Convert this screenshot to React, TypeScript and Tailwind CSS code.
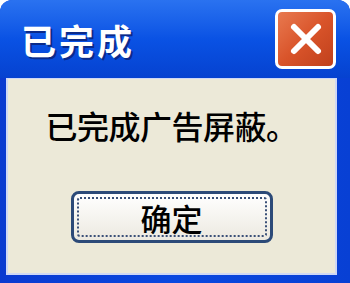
export default function App() {
  return (
    <div className="w-[350px] h-[283px] bg-white overflow-hidden">
      <div className="h-full flex flex-col rounded-t-[12px] bg-gradient-to-r from-[#0a3ad0] via-[#0a48e0] to-[#0840d4]">
        {/* title bar */}
        <div className="h-[78px] shrink-0 flex items-center justify-between pl-[21px] pr-[14px] rounded-t-[12px] bg-gradient-to-b from-[#2a72f0] via-[#0a52e4] to-[#0642d0]">
          <span
            className="text-white text-[35px] font-bold tracking-[3px] leading-none [text-shadow:2px_2px_0_#0a2a8a]"
            style={{ fontFamily: '"Noto Sans CJK SC", sans-serif' }}
          >
            已完成
          </span>
          <button className="w-[61px] h-[60px] rounded-[7px] border-[3px] border-white bg-gradient-to-br from-[#e8794f] via-[#d9542a] to-[#c0401c] flex items-center justify-center">
            <svg width="34" height="34" viewBox="0 0 34 34">
              <path d="M5 5 L29 29 M29 5 L5 29" stroke="#fff" strokeWidth="6" strokeLinecap="round" />
            </svg>
          </button>
        </div>
        {/* body */}
        <div className="flex-1 ml-[6px] mr-[13px] mb-[8px] bg-[#ece9d8] border-l-2 border-t border-b-2 border-r-2 border-[#cfd8f5] flex flex-col items-center">
          <p
            className="mt-[26px] text-[32px] leading-[40px] font-medium tracking-[-0.5px] text-black"
            style={{ fontFamily: '"Noto Sans CJK SC", sans-serif' }}
          >
            已完成广告屏蔽。
          </p>
          <button className="mt-[46px] w-[202px] h-[52px] rounded-[8px] border-[3px] border-[#2c4a78] bg-gradient-to-b from-white to-[#ece9e0] p-[3px]">
            <div
              className="h-full w-full border-2 border-dotted border-[#3a5078] rounded-[3px] flex items-center justify-center text-[31px] font-medium leading-none text-black"
              style={{ fontFamily: '"Noto Sans CJK SC", sans-serif' }}
            >
              确定
            </div>
          </button>
        </div>
      </div>
    </div>
  );
}
